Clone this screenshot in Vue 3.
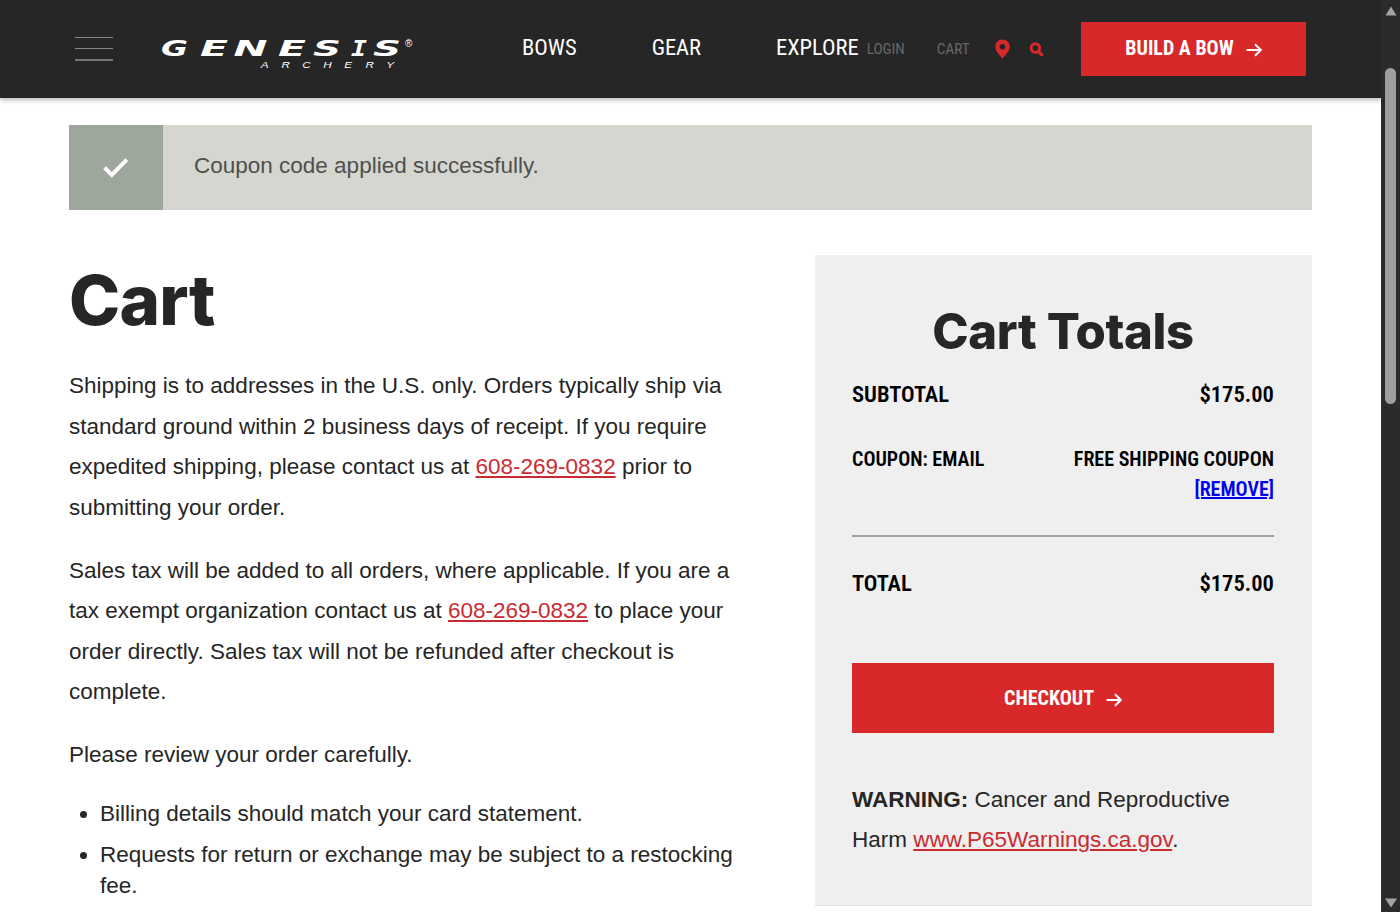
<script setup>
import { ref } from 'vue';

const navItems = ref([
  { id: 1, label: 'BOWS' },
  { id: 2, label: 'GEAR' },
  { id: 3, label: 'EXPLORE' },
]);

const phone = '608-269-0832';

const reviewNotes = ref([
  'Billing details should match your card statement.',
  'Requests for return or exchange may be subject to a restocking fee.',
]);

const totals = ref({
  subtotal: '$175.00',
  total: '$175.00',
  coupon: 'EMAIL',
});
</script>

<template>
  <div class="page">
    <div class="viewport">
      <header class="site-header">
        <div class="menu-toggle">
          <span></span>
          <span></span>
          <span></span>
        </div>

        <svg class="logo" width="256" height="36" viewBox="0 0 256 36">
          <g class="logo-name">
            <text x="1" y="22" textLength="27" lengthAdjust="spacingAndGlyphs">G</text>
            <text x="40" y="22" textLength="28" lengthAdjust="spacingAndGlyphs">E</text>
            <text x="73.5" y="22" textLength="34" lengthAdjust="spacingAndGlyphs">N</text>
            <text x="118" y="22" textLength="28" lengthAdjust="spacingAndGlyphs">E</text>
            <text x="153" y="22" textLength="28" lengthAdjust="spacingAndGlyphs">S</text>
            <text class="serifed" x="191" y="22" textLength="16" lengthAdjust="spacingAndGlyphs">I</text>
            <text x="213" y="22" textLength="28" lengthAdjust="spacingAndGlyphs">S</text>
          </g>
          <text class="logo-mark" x="245" y="13">®</text>
          <text class="logo-sub" transform="scale(1.3 1)" x="77.5 93.5 109.5 125.5 141.8 158 174" y="34.5">ARCHERY</text>
        </svg>

        <nav class="main-nav">
          <a v-for="item in navItems" :key="item.id" class="nav-link condensed">{{ item.label }}</a>
        </nav>

        <div class="utility">
          <a class="utility-link condensed">LOGIN</a>
          <a class="utility-link condensed">CART</a>
          <svg class="pin" width="15" height="20" viewBox="0 0 15 20">
            <path fill-rule="evenodd" d="M7.5 0.5C3.4 0.5 0.3 3.6 0.3 7.6c0 4.6 3.6 7.6 7.2 12 3.6-4.4 7.2-7.4 7.2-12C14.7 3.6 11.6 0.5 7.5 0.5zM7.5 4.9a2.8 2.8 0 1 1 0 5.6 2.8 2.8 0 0 1 0-5.6z" />
          </svg>
          <svg class="search" width="15" height="15" viewBox="0 0 15 15">
            <circle cx="6.4" cy="6.1" r="4.3" />
            <path d="M9.6 9.6l4.1 4.2" />
          </svg>
        </div>

        <a class="build-button">
          <span class="condensed">BUILD A BOW</span>
          <svg class="arrow" width="16" height="14" viewBox="0 0 16 14">
            <path d="M0.5 7h14M9 1.2L14.8 7 9 12.8" />
          </svg>
        </a>
      </header>

      <main class="content">
        <div class="notice">
          <div class="notice-icon">
            <svg width="28" height="24" viewBox="0 0 28 24">
              <path d="M2.6 11.6l7.2 7.4L24.8 3.6" />
            </svg>
          </div>
          <p class="notice-text">Coupon code applied successfully.</p>
        </div>

        <div class="columns">
          <section class="cart">
            <h1>Cart</h1>
            <p>
              Shipping is to addresses in the U.S. only. Orders typically ship via standard ground within 2 business
              days of receipt. If you require expedited shipping, please contact us at <a>{{ phone }}</a> prior to
              submitting your order.
            </p>
            <p>
              Sales tax will be added to all orders, where applicable. If you are a tax exempt organization contact us
              at <a>{{ phone }}</a> to place your order directly. Sales tax will not be refunded after checkout is
              complete.
            </p>
            <p>Please review your order carefully.</p>
            <ul>
              <li v-for="note in reviewNotes" :key="note">{{ note }}</li>
            </ul>
          </section>

          <aside class="totals">
            <h2>Cart Totals</h2>
            <div class="row row-large subtotal">
              <span class="condensed">SUBTOTAL</span>
              <span class="condensed">{{ totals.subtotal }}</span>
            </div>
            <div class="row coupon">
              <span class="condensed">COUPON: {{ totals.coupon }}</span>
              <div class="coupon-value">
                <span class="condensed">FREE SHIPPING COUPON</span>
                <a class="remove condensed">[REMOVE]</a>
              </div>
            </div>
            <div class="row row-large total">
              <span class="condensed">TOTAL</span>
              <span class="condensed">{{ totals.total }}</span>
            </div>
            <a class="checkout">
              <span class="condensed">CHECKOUT</span>
              <svg class="arrow" width="16" height="14" viewBox="0 0 16 14">
                <path d="M0.5 7h14M9 1.2L14.8 7 9 12.8" />
              </svg>
            </a>
            <p class="warning"><strong>WARNING:</strong> Cancer and Reproductive Harm <a>www.P65Warnings.ca.gov</a>.</p>
          </aside>
        </div>
      </main>
    </div>

    <div class="scrollbar">
      <svg width="12" height="10" viewBox="0 0 12 10"><path d="M6 0.5L11.5 9.5H0.5z" /></svg>
      <div class="thumb"></div>
      <svg class="down" width="14" height="10" viewBox="0 0 14 10"><path d="M1 0.5h12L7 9.5z" /></svg>
    </div>
  </div>
</template>

<style>
body {
  margin: 0;
  overflow: hidden;
  background: #fff;
}
</style>

<style scoped>
* {
  box-sizing: border-box;
}

.page {
  display: flex;
  width: 1400px;
  height: 912px;
  overflow: hidden;
  color: #262626;
  font-family: "Liberation Sans", Arial, sans-serif;
  font-size: 22.5px;
}

.viewport {
  width: 1381px;
  height: 912px;
  overflow: hidden;
}

.condensed {
  font-family: Roboto, sans-serif;
  font-stretch: 75%;
  white-space: nowrap;
}

.site-header {
  display: flex;
  align-items: center;
  height: 98px;
  padding: 0 75px;
  background: #262626;
  box-shadow: 0 2px 5px rgba(0, 0, 0, 0.3);
}

.menu-toggle {
  display: flex;
  flex-direction: column;
  justify-content: space-between;
  width: 38px;
  height: 24px;
}

.menu-toggle span {
  height: 1px;
  background: #858585;
}

.menu-toggle span:last-child {
  height: 2px;
  background: #757575;
}

.logo {
  flex-shrink: 0;
  margin: 6px 0 0 47px;
  fill: #fff;
}

.logo-name {
  font-family: "DejaVu Sans", sans-serif;
  font-size: 21px;
  font-style: italic;
  font-weight: 700;
}

.logo-name .serifed {
  font-family: "DejaVu Sans Mono", monospace;
}

.logo-mark {
  font-size: 10px;
}

.logo-sub {
  font-size: 9px;
  font-style: italic;
}

.main-nav {
  display: flex;
  gap: 75px;
  margin: -4px 0 0 106px;
}

.nav-link {
  color: #fff;
  font-size: 22.5px;
  font-weight: 450;
}

.utility {
  display: flex;
  align-items: center;
  margin-left: 8px;
}

.utility-link {
  color: #686868;
  font-size: 15.2px;
}

.utility-link + .utility-link {
  margin-left: 32px;
}

.pin {
  margin-left: 25px;
  fill: #d7282b;
}

.search {
  margin-left: 19px;
  fill: none;
  stroke: #d7282b;
  stroke-width: 3;
}

.build-button,
.checkout {
  display: flex;
  align-items: center;
  justify-content: center;
  gap: 12px;
  background: #d9282a;
  color: #fff;
  font-size: 20px;
  font-weight: 700;
}

.build-button {
  width: 225px;
  height: 54px;
  margin-left: auto;
}

.build-button .condensed {
  margin-top: -2px;
}

.arrow {
  margin-top: 1px;
  fill: none;
  stroke: #fff;
  stroke-width: 2;
}

.checkout .arrow {
  margin-top: 4px;
}

.content {
  padding: 27px 69px 0;
}

.notice {
  display: flex;
  height: 85px;
  background: #d4d6cf;
}

.notice-icon {
  display: flex;
  align-items: center;
  justify-content: center;
  width: 94px;
  background: #9ea79c;
}

.notice-icon path {
  fill: none;
  stroke: #fff;
  stroke-width: 4;
}

.notice-text {
  margin: 0 0 0 31px;
  color: #4f504e;
  line-height: 82px;
}

.columns {
  display: flex;
  justify-content: space-between;
  padding-top: 45px;
}

.cart {
  width: 672px;
}

.cart h1,
.totals h2 {
  margin: 0;
  font-family: Inter, sans-serif;
  font-weight: 800;
}

.cart h1 {
  padding-top: 4px;
  font-size: 69px;
  line-height: 82px;
  letter-spacing: -0.8px;
  margin-bottom: 25px;
}

.cart p {
  margin: 0 0 22.5px;
  line-height: 40.5px;
}

.cart p a,
.warning a {
  color: #ca2b31;
  text-decoration: underline;
}

.cart ul {
  margin: 0;
  padding: 0 0 0 31px;
}

.cart li {
  margin-bottom: 9.5px;
  line-height: 31px;
}

.totals {
  width: 497px;
  height: 651px;
  padding: 47px 38px 0 37px;
  background: #efefef;
  border-bottom: 1px solid #e4e4e4;
}

.totals h2 {
  font-size: 49px;
  line-height: 60px;
  letter-spacing: -0.4px;
  text-align: center;
}

.row {
  display: flex;
  justify-content: space-between;
  color: #000;
  font-size: 20px;
  font-weight: 600;
  line-height: 30px;
}

.row-large {
  font-size: 22.6px;
}

.subtotal {
  padding-top: 18px;
}

.coupon {
  height: 127px;
  padding-top: 34px;
  border-bottom: 2px solid #9ea39d;
}

.coupon-value {
  display: flex;
  flex-direction: column;
  align-items: flex-end;
}

.remove {
  color: #0000ee;
  text-decoration: underline;
}

.total {
  padding-top: 32px;
}

.checkout {
  height: 70px;
  margin-top: 64px;
}

.warning {
  margin: 46.5px 0 0;
  line-height: 40.5px;
}

.scrollbar {
  display: flex;
  flex-direction: column;
  align-items: center;
  width: 19px;
  padding: 6px 0 4px;
  background: #2b2b2b;
}

.scrollbar path {
  fill: #a3a3a3;
}

.thumb {
  width: 11px;
  height: 336px;
  margin-top: 52px;
  border-radius: 6px;
  background: #9f9f9f;
}

.down {
  margin-top: auto;
}
</style>
